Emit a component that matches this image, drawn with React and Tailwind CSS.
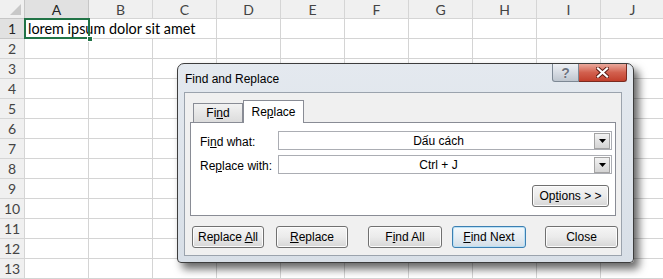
import React from "react";

const COLS = ["A", "B", "C", "D", "E", "F", "G", "H", "I", "J"];
const ROWS = Array.from({ length: 13 }, (_, i) => i + 1);

function Btn({ children, className = "", primary = false }) {
  return (
    <div
      className={
        "h-[22px] shrink-0 flex items-center justify-center rounded-[3px] border text-[12px] text-black " +
        (primary
          ? "border-[#3c7fb1] bg-gradient-to-b from-[#f4f9fc] via-[#e6eef4] to-[#d2dde6] shadow-[inset_0_0_0_1px_#b9e0f6] "
          : "border-[#707070] bg-gradient-to-b from-[#f5f5f5] via-[#ebebeb] to-[#d6d6d6] shadow-[inset_0_0_0_1px_#fcfcfc] ") +
        className
      }
    >
      {children}
    </div>
  );
}

function Combo({ value }) {
  return (
    <div className="ml-[87px] mr-[3px] h-[19px] flex items-center border border-[#abadb3] bg-white">
      <div className="flex-1 text-center text-[12px] text-black leading-none pl-[4px]">{value}</div>
      <div className="w-[16px] h-[16px] mr-[1px] flex items-center justify-center border border-[#a3a3a3] bg-gradient-to-b from-[#f2f2f2] to-[#d4d4d4]">
        <svg width="7" height="4" viewBox="0 0 7 4">
          <path d="M0 0H7L3.5 4Z" fill="#000" />
        </svg>
      </div>
    </div>
  );
}

export default function App() {
  return (
    <div className="relative w-[663px] h-[279px] overflow-hidden bg-white font-['Lato','Liberation_Sans',sans-serif]">
      {/* Header row */}
      <div className="flex h-[19px]">
        <div className="w-[25px] shrink-0 h-full bg-[#f0f0f0] border-r border-b border-[#c6c6c6] relative">
          <svg className="absolute right-[3px] bottom-[3px]" width="11" height="11" viewBox="0 0 11 11">
            <path d="M11 0V11H0Z" fill="#c8c8c8" />
          </svg>
        </div>
        {COLS.map((c, i) => (
          <div
            key={c}
            className={
              "w-[64px] shrink-0 h-full flex items-center justify-center text-[14px] border-r border-b " +
              (i === 0
                ? "bg-[#e1e1e1] border-r-[#c6c6c6] border-b-[#ababab] text-[#262626]"
                : "bg-[#f0f0f0] border-[#d5d5d5] text-[#444]")
            }
          >
            {c}
          </div>
        ))}
      </div>
      {ROWS.map((r) => (
        <div key={r} className="flex h-[20px]">
          <div
            className={
              "w-[25px] shrink-0 h-full flex items-center justify-center text-[14px] border-r border-b " +
              (r === 1
                ? "bg-[#e1e1e1] border-[#c6c6c6] text-[#262626]"
                : "bg-[#f0f0f0] border-[#d5d5d5] text-[#444]")
            }
          >
            {r}
          </div>
          {COLS.map((c, i) => (
            <div
              key={c}
              className={
                "w-[64px] shrink-0 h-full border-b border-[#d4d4d4] relative " +
                (r === 1 && (i === 0 || i === 1) ? "" : "border-r")
              }
            >
              {r === 1 && i === 0 && (
                <>
                  <div className="absolute left-[-1px] top-[-1px] w-[66px] h-[21px] border-2 border-[#217346] z-10" />
                  <div className="absolute right-[-4px] bottom-[-4px] w-[6px] h-[6px] bg-[#217346] border border-white z-20" />
                  <span className="absolute left-[3px] top-[1px] z-0 whitespace-nowrap text-[14.4px] text-black leading-[18px]">
                    lorem ipsum dolor sit amet
                  </span>
                </>
              )}
            </div>
          ))}
        </div>
      ))}

      {/* Dialog */}
      <div className="absolute left-[177px] top-[63px] w-[457px] h-[200px] rounded-t-[7px] rounded-b-[4px] border border-[#3d3d3d] bg-gradient-to-b from-[#e4e9ef] to-[#d8dfe7] shadow-[5px_6px_9px_rgba(0,0,0,0.6)] font-['Liberation_Sans','Arial',sans-serif] flex flex-col">
        <div className="h-[28px] flex items-start shrink-0">
          <span className="ml-[7px] mt-[6px] text-[12px] text-black">Find and Replace</span>
          <div className="ml-auto mr-[6px] flex">
            <div className="w-[27px] h-[18px] flex items-center justify-center border border-[#7d8894] border-t-0 rounded-bl-[3px] bg-gradient-to-b from-[#eef1f5] via-[#d7dce3] to-[#bfc6cf]">
              <span className="text-[14px] font-bold text-[#6d7480] leading-none [text-shadow:0_0_1px_#fff]">?</span>
            </div>
            <div className="w-[48px] h-[18px] flex items-center justify-center border border-[#7a2a20] border-l-0 border-t-0 rounded-br-[3px] bg-gradient-to-b from-[#e9a89c] via-[#d2604e] to-[#c23f2c]">
              <svg width="13" height="11" viewBox="0 0 13 11">
                <path d="M2 1.5L11 9.5M11 1.5L2 9.5" stroke="#5a1a12" strokeWidth="4" strokeLinecap="square" />
                <path d="M2 1.5L11 9.5M11 1.5L2 9.5" stroke="#fff" strokeWidth="2.2" strokeLinecap="square" />
              </svg>
            </div>
          </div>
        </div>
        {/* client */}
        <div className="ml-[6px] mr-[11px] mb-[6px] flex-1 border border-[#9ba3ad] bg-[#f0f0f0] flex flex-col px-[5px] pt-[7px]">
          <div className="flex items-end h-[22px] pl-[3px]">
            <div className="w-[50px] h-[19px] flex items-center justify-center border border-b-0 border-[#898c95] bg-gradient-to-b from-[#f2f2f2] to-[#dcdcdc] text-[12px] text-black">
              <span>
                Fi<u>n</u>d
              </span>
            </div>
            <div className="w-[61px] h-[23px] -mb-px relative z-10 flex items-center justify-center border border-b-0 border-[#898c95] bg-white text-[12px] text-black">
              <span>
                Re<u>p</u>lace
              </span>
            </div>
          </div>
          <div className="h-[94px] border border-[#898c95] bg-white flex flex-col pt-[8px]">
            <div className="relative">
              <span className="absolute left-[9px] top-[2px] text-[12px] text-black">
                Fi<u>n</u>d what:
              </span>
              <Combo value="Dấu cách" />
            </div>
            <div className="relative mt-[5px]">
              <span className="absolute left-[9px] top-[2px] text-[12px] text-black">
                Re<u>p</u>lace with:
              </span>
              <Combo value="Ctrl + J" />
            </div>
            <div className="flex justify-end mt-[11px] mr-[6px]">
              <Btn className="w-[77px] h-[21px]">
                <span>
                  Op<u>t</u>ions &gt; &gt;
                </span>
              </Btn>
            </div>
          </div>
          <div className="flex mt-[10px] pl-[2px]">
            <Btn className="w-[72px]">
              <span>
                Replace <u>A</u>ll
              </span>
            </Btn>
            <Btn className="w-[72px] ml-[12px]">
              <span>
                <u>R</u>eplace
              </span>
            </Btn>
            <Btn className="w-[74px] ml-[20px]">
              <span>
                F<u>i</u>nd All
              </span>
            </Btn>
            <Btn primary className="w-[74px] ml-[10px]">
              <span>
                <u>F</u>ind Next
              </span>
            </Btn>
            <Btn className="w-[73px] ml-[19px]">
              <span>Close</span>
            </Btn>
          </div>
        </div>
      </div>
    </div>
  );
}
